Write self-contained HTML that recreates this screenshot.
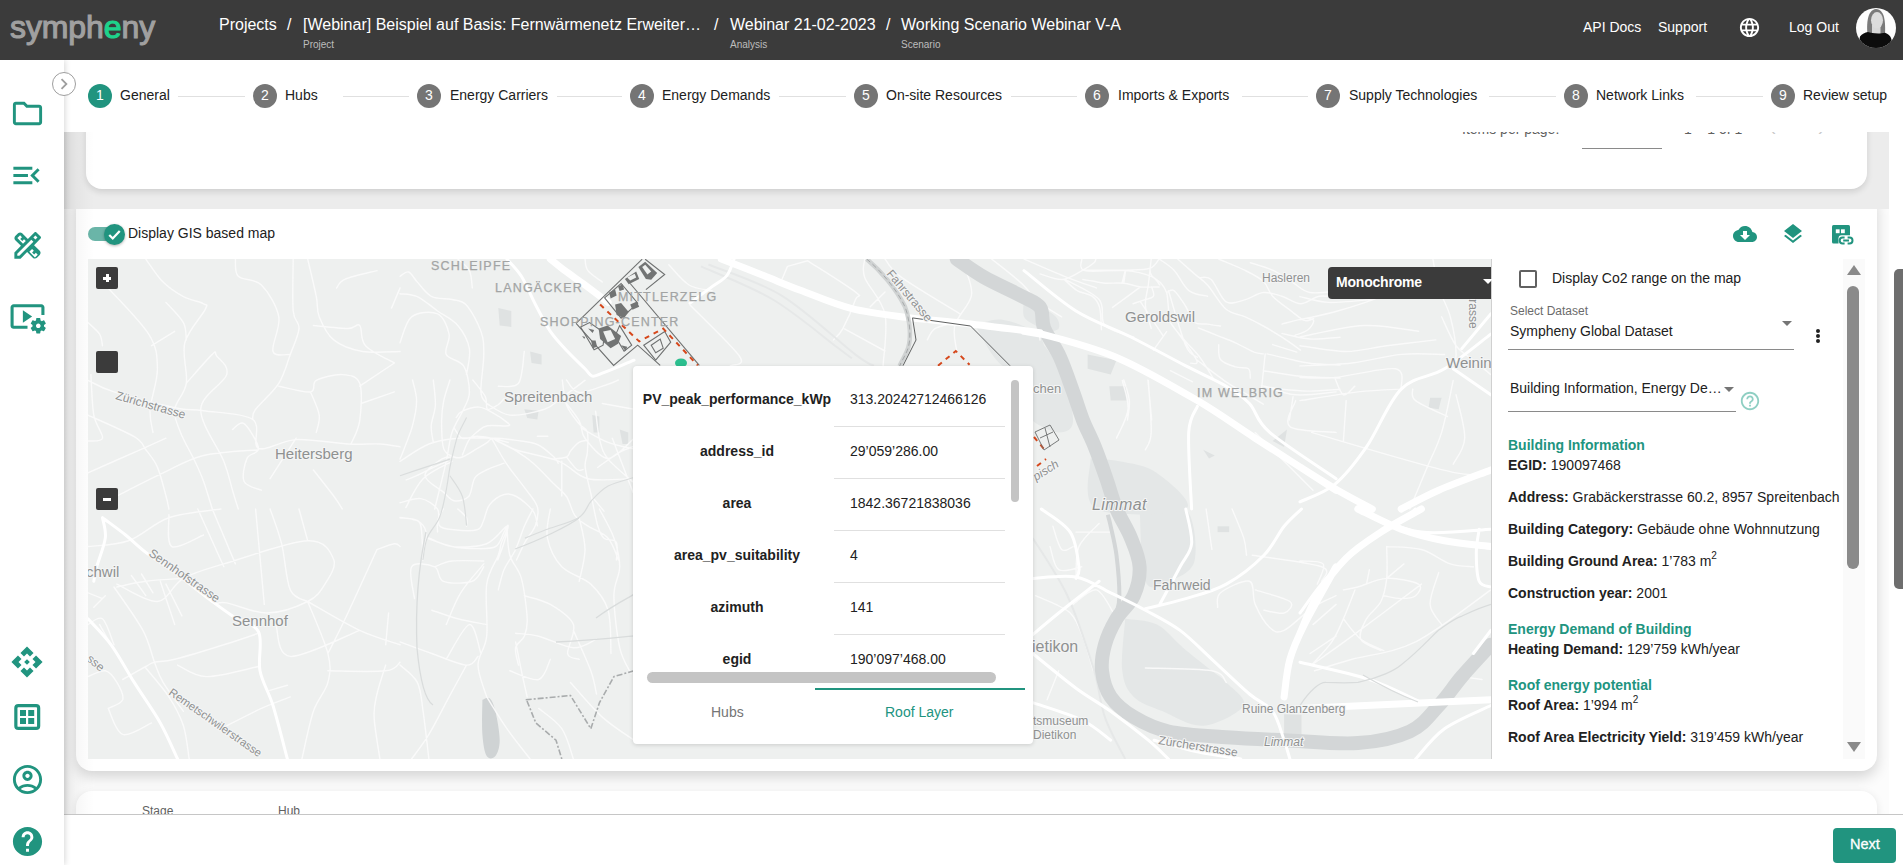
<!DOCTYPE html>
<html><head><meta charset="utf-8">
<style>
*{box-sizing:border-box;margin:0;padding:0}
html,body{width:1903px;height:865px;overflow:hidden;background:#fff;font-family:"Liberation Sans",sans-serif;color:#212121}
.t{position:absolute;white-space:nowrap;line-height:1}
.z{z-index:6}
#hdr{position:absolute;left:0;top:0;width:1903px;height:60px;background:#3b3b3b;z-index:10}
#hdr .bc{color:#fff;font-size:16px}
#hdr .sub{color:#bdbdbd;font-size:10px}
#hdr .nav{color:#fff;font-size:14px}
#side{position:absolute;left:0;top:60px;width:64px;height:805px;background:#fff;z-index:8;box-shadow:1px 0 6px rgba(0,0,0,.16)}
#side svg{position:absolute;fill:#21947f}
#content{position:absolute;left:64px;top:60px;width:1825px;height:805px;background:#f7f7f7;overflow:hidden}
#stepper{position:absolute;left:64px;top:60px;width:1839px;height:72px;background:#fff;z-index:4}
.sc{position:absolute;width:24px;height:24px;border-radius:50%;background:#757575;color:#fff;font-size:14px;text-align:center;line-height:23px;z-index:5}
.sl{position:absolute;font-size:14px;color:#212121;white-space:nowrap;line-height:1;z-index:5}
.ln{position:absolute;height:1px;background:#e0e0e0;z-index:5}
.card{position:absolute;background:#fff;border-radius:16px}
.pt{position:absolute;font-size:14px;line-height:1;white-space:nowrap}
.pl{font-weight:bold;text-align:center;width:200px}
.sep{position:absolute;height:1px;background:#e0e0e0;left:834px;width:171px}
.ri{position:absolute;left:1508px;font-size:14px;line-height:1;white-space:nowrap;color:#212121}
.ri b{font-weight:bold}
.rh{position:absolute;left:1508px;font-size:14px;line-height:1;white-space:nowrap;color:#21947f;font-weight:bold}
sup{font-size:10px;vertical-align:top;position:relative;top:-3px}
</style></head><body>

<div id="hdr">
  <div class="t" style="left:10px;top:11px;font-size:32px;color:#a0a0a0;letter-spacing:-0.1px;-webkit-text-stroke:1.1px #a0a0a0">symph<span style="color:#1ed38b;-webkit-text-stroke:1.1px #1ed38b">e</span>ny</div>
  <div class="t bc" style="left:219px;top:17px">Projects</div>
  <div class="t bc" style="left:287px;top:17px">/</div>
  <div class="t bc" style="left:303px;top:17px">[Webinar] Beispiel auf Basis: Fernwärmenetz Erweiter…</div>
  <div class="t sub" style="left:303px;top:40px">Project</div>
  <div class="t bc" style="left:714px;top:17px">/</div>
  <div class="t bc" style="left:730px;top:17px">Webinar 21-02-2023</div>
  <div class="t sub" style="left:730px;top:40px">Analysis</div>
  <div class="t bc" style="left:886px;top:17px">/</div>
  <div class="t bc" style="left:901px;top:17px">Working Scenario Webinar V-A</div>
  <div class="t sub" style="left:901px;top:40px">Scenario</div>
  <div class="t nav" style="left:1583px;top:20px">API Docs</div>
  <div class="t nav" style="left:1658px;top:20px">Support</div>
  <svg style="position:absolute;left:1738px;top:16px" width="23" height="23" viewBox="0 0 24 24"><path fill="#fff" d="M11.99 2C6.47 2 2 6.48 2 12s4.47 10 9.99 10C17.52 22 22 17.52 22 12S17.52 2 11.99 2zm6.93 6h-2.95c-.32-1.25-.78-2.45-1.38-3.56 1.84.63 3.37 1.91 4.33 3.56zM12 4.04c.83 1.2 1.48 2.53 1.91 3.96h-3.82c.43-1.43 1.08-2.76 1.91-3.96zM4.26 14C4.1 13.36 4 12.69 4 12s.1-1.36.26-2h3.38c-.08.66-.14 1.32-.14 2 0 .68.06 1.34.14 2H4.26zm.82 2h2.95c.32 1.25.78 2.45 1.38 3.56-1.84-.63-3.37-1.9-4.33-3.56zm2.95-8H5.08c.96-1.66 2.49-2.93 4.33-3.56C8.81 5.55 8.35 6.75 8.03 8zM12 19.96c-.83-1.2-1.48-2.53-1.91-3.96h3.82c-.43 1.43-1.08 2.76-1.91 3.96zM14.34 14H9.66c-.09-.66-.16-1.32-.16-2 0-.68.07-1.35.16-2h4.68c.09.65.16 1.32.16 2 0 .68-.07 1.34-.16 2zm.25 5.56c.6-1.11 1.06-2.31 1.38-3.56h2.95c-.96 1.65-2.49 2.93-4.33 3.56zM16.36 14c.08-.66.14-1.32.14-2 0-.68-.06-1.34-.14-2h3.38c.16.64.26 1.31.26 2s-.1 1.36-.26 2h-3.38z"/></svg>
  <div class="t nav" style="left:1789px;top:20px">Log Out</div>
  <svg style="position:absolute;left:1856px;top:8px" width="40" height="40" viewBox="0 0 40 40">
    <defs><clipPath id="av"><circle cx="20" cy="20" r="20"/></clipPath></defs>
    <g clip-path="url(#av)">
      <rect width="40" height="40" fill="#fdfdfd"/>
      <path d="M11.5 27 C10.5 16 11 2 20 1 C29 1.5 29.5 14 29 27 Z" fill="#7a7a7a"/>
      <rect x="16" y="17" width="8.5" height="10" fill="#d8d8d8"/>
      <ellipse cx="21" cy="12.3" rx="6" ry="8.3" fill="#dcdcdc"/>
      <path d="M2 40 L4 28.5 C6 26 9 24.5 12 24 C15 25.5 24 26 29 24.8 C32 26 34.5 28 35 30 L38 40 Z" fill="#0c0c0c"/>
    </g>
  </svg>
</div>

<div id="content"></div>
<div id="side">
  <svg style="left:10px;top:36px" width="35" height="35" viewBox="0 0 24 24"><path d="M9.17 6l2 2H20v10H4V6h5.17M10 4H4c-1.1 0-1.99.9-1.99 2L2 18c0 1.1.9 2 2 2h16c1.1 0 2-.9 2-2V8c0-1.1-.9-2-2-2h-8l-2-2z"/></svg>
  <svg style="left:9px;top:98px" width="35" height="35" viewBox="0 0 24 24"><path d="M3 18h13v-2H3v2zm0-5h10v-2H3v2zm0-7v2h13V6H3zm18 9.59L17.42 12 21 8.41 19.59 7l-5 5 5 5L21 15.59z"/></svg>
  <svg style="left:10px;top:168px" width="35" height="35" viewBox="0 0 24 24"><path d="M20.97 7.27c.39-.39.39-1.02 0-1.41l-2.83-2.830c-.39-.39-1.02-.39-1.41 0l-4.49 4.49-3.89-3.89c-.78-.78-2.05-.78-2.83 0l-1.9 1.9c-.78.78-.78 2.05 0 2.83l3.89 3.89L3 16.76V21h4.24l4.52-4.52 3.89 3.89c.95.95 2.23.6 2.83 0l1.9-1.9c.78-.78.78-2.05 0-2.83l-3.89-3.89 4.48-4.48zM5.04 6.94l1.89-1.9L8.2 6.31 7.02 7.5l1.41 1.41 1.19-1.19 1.2 1.2-1.9 1.9-3.88-3.88zm11.3 8.68l-1.190 1.19 1.41 1.41 1.19-1.19 1.27 1.27-1.9 1.9-3.89-3.89 1.9-1.9 1.21 1.21zM6.41 19H5v-1.41l9.61-9.61 1.3 1.3.11.11L6.41 19zm9.61-12.44l1.41-1.41 1.41 1.41-1.41 1.41-1.41-1.41z"/></svg>
  <svg style="left:9px;top:238px" width="37" height="37" viewBox="0 0 24 24"><path d="M3 6h18v5h2V6c0-1.1-.9-2-2-2H3c-1.1 0-2 .9-2 2v12c0 1.1.9 2 2 2h9v-2H3V6zM15 12 9 8v8zM22.71 18.43c.03-.29.04-.58.01-.86l1.07-.85c.1-.08.12-.21.06-.32l-1.03-1.79c-.06-.11-.19-.15-.31-.11l-1.28.5c-.23-.17-.48-.31-.75-.42l-.2-1.36c-.02-.13-.12-.22-.25-.22h-2.07c-.12 0-.23.09-.25.21l-.2 1.36c-.26.11-.51.26-.74.42l-1.28-.5c-.12-.05-.25 0-.31.11l-1.03 1.79c-.06.11-.04.24.06.32l1.07.86c-.03.29-.04.58-.01.86l-1.07.85c-.1.08-.12.21-.06.32l1.03 1.79c.06.11.19.15.31.11l1.27-.5c.23.17.48.31.75.42l.2 1.36c.02.12.12.21.25.21h2.07c.12 0 .23-.09.25-.21l.2-1.36c.26-.11.51-.26.74-.42l1.28.5c.12.05.25 0 .31-.11l1.03-1.79c.06-.11.04-.24-.06-.32l-1.06-.86zM19 19.5c-.83 0-1.5-.67-1.5-1.5s.67-1.5 1.5-1.5 1.5.67 1.5 1.5-.67 1.5-1.5 1.5z"/></svg>
  <svg style="left:10px;top:585px" width="34" height="34" viewBox="0 0 24 24"><path d="M14 12l-2 2-2-2 2-2 2 2zm-2-6l2.12 2.12 2.5-2.5L12 1 7.38 5.62l2.5 2.5L12 6zm-6 6l2.12-2.12-2.5-2.5L1 12l4.62 4.62 2.5-2.5L6 12zm12 0l-2.12 2.12 2.5 2.5L23 12l-4.62-4.62-2.5 2.5L18 12zm-6 6l-2.12-2.12-2.5 2.5L12 23l4.62-4.62-2.5-2.5L12 18z"/></svg>
  <svg style="left:10px;top:640px" width="35" height="35" viewBox="10 700 35 35"><rect x="15.85" y="705.6" width="22.8" height="22.8" rx="2.5" fill="none" stroke="#21947f" stroke-width="3.2"/><rect x="20" y="710" width="6" height="6"/><rect x="28.2" y="710" width="6" height="6"/><rect x="20" y="718" width="6" height="6"/><rect x="28.2" y="718" width="6" height="6"/></svg>
  <svg style="left:10px;top:702px" width="35" height="35" viewBox="0 0 24 24"><path d="M12 2C6.48 2 2 6.48 2 12s4.48 10 10 10 10-4.48 10-10S17.52 2 12 2zM7.35 18.5C8.66 17.56 10.26 17 12 17s3.34.56 4.65 1.5c-1.31.94-2.91 1.5-4.65 1.5s-3.34-.56-4.65-1.5zm10.79-1.38C16.45 15.8 14.32 15 12 15s-4.45.8-6.14 2.12C4.7 15.730 4 13.95 4 12c0-4.42 3.58-8 8-8s8 3.58 8 8c0 1.95-.7 3.73-1.86 5.12zM12 6c-1.93 0-3.5 1.57-3.5 3.5S10.07 13 12 13s3.5-1.57 3.5-3.5S13.93 6 12 6zm0 5c-.83 0-1.5-.67-1.5-1.5S11.17 8 12 8s1.5.67 1.5 1.5S12.83 11 12 11z"/></svg>
  <svg style="left:10px;top:764px" width="35" height="35" viewBox="0 0 24 24"><path d="M12 2C6.48 2 2 6.48 2 12s4.48 10 10 10 10-4.48 10-10S17.52 2 12 2zm1 17h-2v-2h2v2zm2.07-7.75l-.9.92C13.45 12.9 13 13.5 13 15h-2v-.5c0-1.1.45-2.1 1.17-2.83l1.24-1.26c.37-.36.59-.86.59-1.41 0-1.1-.9-2-2-2s-2 .9-2 2H8c0-2.21 1.79-4 4-4s4 1.79 4 4c0 .88-.36 1.68-.93 2.25z"/></svg>
</div>
<!-- collapse btn -->
<div style="position:absolute;left:52px;top:72px;width:24px;height:24px;border-radius:50%;background:#fff;border:1px solid #9e9e9e;z-index:9"><svg width="22" height="22" viewBox="0 0 24 24" style="position:absolute;left:0;top:0"><path fill="#9e9e9e" d="M10 6 8.59 7.41 13.17 12l-4.58 4.59L10 18l6-6z"/></svg></div>

<div id="stepper"></div>
<div class="sc" style="left:88px;top:84px;background:#21947f">1</div>
<div class="sl" style="left:120px;top:88px">General</div>
<div class="ln" style="left:178px;top:96px;width:67px"></div>
<div class="sc" style="left:253px;top:84px;background:#757575">2</div>
<div class="sl" style="left:285px;top:88px">Hubs</div>
<div class="ln" style="left:343px;top:96px;width:66px"></div>
<div class="sc" style="left:417px;top:84px;background:#757575">3</div>
<div class="sl" style="left:450px;top:88px">Energy Carriers</div>
<div class="ln" style="left:557px;top:96px;width:65px"></div>
<div class="sc" style="left:630px;top:84px;background:#757575">4</div>
<div class="sl" style="left:662px;top:88px">Energy Demands</div>
<div class="ln" style="left:779px;top:96px;width:67px"></div>
<div class="sc" style="left:854px;top:84px;background:#757575">5</div>
<div class="sl" style="left:886px;top:88px">On-site Resources</div>
<div class="ln" style="left:1011px;top:96px;width:66px"></div>
<div class="sc" style="left:1085px;top:84px;background:#757575">6</div>
<div class="sl" style="left:1118px;top:88px">Imports &amp; Exports</div>
<div class="ln" style="left:1242px;top:96px;width:66px"></div>
<div class="sc" style="left:1316px;top:84px;background:#757575">7</div>
<div class="sl" style="left:1349px;top:88px">Supply Technologies</div>
<div class="ln" style="left:1489px;top:96px;width:67px"></div>
<div class="sc" style="left:1564px;top:84px;background:#757575">8</div>
<div class="sl" style="left:1596px;top:88px">Network Links</div>
<div class="ln" style="left:1696px;top:96px;width:67px"></div>
<div class="sc" style="left:1771px;top:84px;background:#757575">9</div>
<div class="sl" style="left:1803px;top:88px">Review setup</div>
<!-- content backgrounds -->
<div style="position:absolute;left:64px;top:132px;width:1825px;height:77px;background:#ececec;z-index:2"></div>
<div style="position:absolute;left:64px;top:208px;width:1825px;height:606px;background:#fcfcfc;z-index:0"></div>
<div style="position:absolute;left:1889px;top:60px;width:14px;height:805px;background:#fff;z-index:1"></div>
<!-- top card -->
<div class="card" style="left:86px;top:100px;width:1781px;height:89px;z-index:3;box-shadow:0 3px 6px rgba(0,0,0,.12)"></div>
<div class="t" style="left:1462px;top:122px;font-size:14px;color:#616161;z-index:3">Items per page:</div>
<div style="position:absolute;left:1582px;top:148px;width:80px;height:1px;background:#8a8a8a;z-index:3"></div>
<div class="t" style="left:1684px;top:122px;font-size:14px;color:#616161;z-index:3">1 – 1 of 1</div>
<div class="t" style="left:1770px;top:120px;font-size:18px;color:#c8c8c8;z-index:3">‹</div><div class="t" style="left:1818px;top:120px;font-size:18px;color:#c8c8c8;z-index:3">›</div>
<!-- map card -->
<div class="card" style="left:76px;top:190px;width:1801px;height:581px;z-index:1;box-shadow:0 6px 14px rgba(0,0,0,.16)"></div>
<div style="position:absolute;left:88px;top:227px;width:28px;height:14px;border-radius:7px;background:#6ab5a8;z-index:3"></div>
<div style="position:absolute;left:104px;top:224px;width:21px;height:21px;border-radius:50%;background:#21947f;z-index:3;box-shadow:0 1px 3px rgba(0,0,0,.3)"><svg width="21" height="21" viewBox="0 0 24 24"><path fill="none" stroke="#fff" stroke-width="2.6" d="M6 12.5l4 4 8-8.5"/></svg></div>
<div class="t" style="left:128px;top:226px;font-size:14px;color:#212121;z-index:3">Display GIS based map</div>
<svg style="position:absolute;left:1733px;top:222px;z-index:3" width="24" height="24" viewBox="0 0 24 24"><path fill="#21947f" d="M19.35 10.04C18.67 6.59 15.64 4 12 4 9.11 4 6.6 5.64 5.35 8.04 2.34 8.36 0 10.91 0 14c0 3.31 2.690 6 6 6h13c2.76 0 5-2.24 5-5 0-2.64-2.05-4.78-4.65-4.96zM17 13l-5 5-5-5h3V9h4v4h3z"/></svg>
<svg style="position:absolute;left:1781px;top:222px;z-index:3" width="24" height="24" viewBox="0 0 24 24"><path fill="#21947f" d="M11.99 18.54l-7.37-5.73L3 14.07l9 7 9-7-1.63-1.27-7.38 5.74zM12 16l7.36-5.73L21 9l-9-7-9 7 1.63 1.27L12 16z"/></svg>
<svg style="position:absolute;left:1830px;top:223px;z-index:3" width="26" height="24" viewBox="1830 223 26 24"><rect x="1832" y="225" width="18" height="18.5" rx="1.5" fill="#21947f"/><rect x="1835.8" y="229.3" width="3.8" height="3.9" fill="#fff"/><rect x="1841" y="229.3" width="3.8" height="3.9" fill="#fff"/><rect x="1838.5" y="235.2" width="17" height="11" rx="3" fill="#fff"/><path fill="none" stroke="#21947f" stroke-width="2" d="M1844.6 237.6h-2a2.9 2.9 0 0 0 0 5.8h2M1847.6 237.6h2a2.9 2.9 0 0 1 0 5.8h-2M1843.2 240.5h5.8"/></svg>

<div style="position:absolute;left:64px;top:132px;width:30px;height:733px;z-index:3;background:linear-gradient(to right,rgba(0,0,0,.085),rgba(0,0,0,.03) 40%,rgba(0,0,0,0))"></div>
<!-- map -->
<div style="position:absolute;left:88px;top:259px;width:1404px;height:500px;background:#eef0ef;overflow:hidden;z-index:3;border-right:1px solid #d0d0d0">
<svg width="1404" height="500" viewBox="0 0 1404 500" style="position:absolute;left:0;top:0">
<rect width="1404" height="500" fill="#eef0ef"/>
<path d="M1037.2 359.8 C1042.5 360.8 1059.3 360.8 1068.9 365.6 C1078.6 370.4 1085.8 381.0 1095.0 388.7 C1104.1 396.4 1116.6 406.1 1123.9 411.8 C1131.1 417.6 1133.0 417.6 1138.3 423.4 C1143.6 429.2 1159.5 439.3 1155.7 446.5 C1151.8 453.8 1128.7 465.8 1115.2 466.8 C1101.7 467.7 1086.3 457.1 1074.7 452.3 C1063.2 447.5 1052.6 444.6 1045.8 437.9 C1039.1 431.1 1035.7 424.9 1034.3 411.8 C1032.8 398.8 1036.7 368.5 1037.2 359.8" fill="#e4e7e7"/>
<path d="M1051.6 250.0 C1059.3 250.0 1088.7 241.3 1097.8 250.0 C1107.0 258.7 1109.4 290.0 1106.5 302.0 C1103.6 314.1 1088.7 318.9 1080.5 322.3 C1072.3 325.6 1062.2 334.3 1057.4 322.3 C1052.6 310.2 1052.6 262.0 1051.6 250.0" fill="#e4e7e7"/>
<path d="M936.0 80.9 C938.9 81.4 947.1 78.0 953.3 83.8 C959.6 89.6 968.3 102.6 973.6 115.6 C978.9 128.6 985.6 152.2 985.1 161.8 C984.7 171.5 977.4 173.4 970.7 173.4 C963.9 173.4 950.5 166.7 944.7 161.8 C938.9 157.0 937.4 158.0 936.0 144.5 C934.6 131.0 936.0 91.5 936.0 80.9" fill="#e4e7e7"/>
<path d="M1002.5 199.4 C1007.3 199.9 1020.3 199.9 1031.4 202.3 C1042.5 204.7 1057.9 205.9 1068.9 213.9 C1080.0 221.8 1108.0 244.0 1097.8 250.0 C1087.7 256.0 1024.2 258.4 1008.3 250.0 C992.4 241.6 1003.4 207.9 1002.5 199.4" fill="#e4e7e7"/>
<path d="M936.0 40.5 C938.4 41.4 945.2 43.4 950.5 46.2 C955.7 49.1 964.4 53.9 967.8 57.8 C971.2 61.7 972.1 67.0 970.7 69.4 C969.2 71.8 963.0 72.7 959.1 72.3 C955.3 71.8 951.4 68.9 947.6 66.5 C943.7 64.1 937.9 62.1 936.0 57.8 C934.1 53.5 936.0 43.4 936.0 40.5" fill="#e4e7e7"/>
<path d="M887.1 66.2 C891.7 65.3 903.9 58.9 914.7 60.7 C925.5 62.5 945.8 69.6 952.0 77.2 C958.2 84.9 958.2 101.8 952.0 106.7 C945.8 111.6 925.5 113.4 914.7 106.7 C903.9 99.9 891.7 73.0 887.1 66.2" fill="#e4e7e7"/>
<path d="M410.3 49.1 L423.3 52.0 L423.3 67.9 L411.7 66.5" fill="#dfe2e2"/>
<path d="M442.1 92.5 L453.6 95.4 L453.6 105.5 L443.5 104.0" fill="#dfe2e2"/>
<path d="M436.3 150.3 L450.7 151.7 L449.3 160.4 L439.2 159.0" fill="#dfe2e2"/>
<path d="M504.2 156.1 L511.4 157.5 L511.4 173.4 L505.6 173.4" fill="#dfe2e2"/>
<path d="M531.7 170.5 L540.3 173.4 L540.3 185.0 L534.5 185.0" fill="#dfe2e2"/>
<path d="M999.6 95.4 L1028.5 101.2 L1022.7 115.6 L999.6 109.8" fill="#dfe2e2"/>
<path d="M1021.3 127.2 L1038.6 127.2 L1038.6 141.6 L1022.7 141.6" fill="#dfe2e2"/>
<path d="M1115.2 190.8 L1126.8 196.5 L1121.0 199.4" fill="#dfe2e2"/>
<path d="M1196.1 455.2 L1213.5 455.8 L1213.5 475.4 L1196.1 475.4" fill="#dfe2e2"/>
<path d="M1129.6 267.3 L1141.2 267.3 L1141.2 273.1 L1129.6 273.1" fill="#dfe2e2"/>
<path d="M1342.1 138.7 L1353.6 138.7 L1350.7 150.3 L1340.6 148.8" fill="#dfe2e2"/>
<path d="M1184.6 182.1 L1199.0 170.5 L1196.1 187.9" fill="#dfe2e2"/>
<path d="M394.4 440.8 C395.6 440.5 399.4 437.4 401.6 439.3 C403.8 441.2 405.7 445.3 407.4 452.3 C409.1 459.3 411.7 473.7 411.7 481.2 C411.7 488.7 409.5 494.5 407.4 497.1 C405.2 499.8 400.9 500.7 398.7 497.1 C396.5 493.5 395.1 484.8 394.4 475.4 C393.6 466.0 394.4 446.5 394.4 440.8" fill="#cfd3d4"/>
<g fill="none" stroke="#fbfbfb" stroke-linecap="round" stroke-linejoin="round" opacity="0.9">
<path stroke-width="1.45" d="M0.0 121.4 C4.3 123.3 11.6 128.4 26.0 132.9 C40.5 137.5 71.8 145.7 86.7 148.8 C101.6 152.0 102.6 149.8 115.6 151.7 C128.6 153.7 155.6 154.1 164.7 160.4 C173.9 166.7 163.3 185.9 170.5 189.3 C177.7 192.7 193.2 181.4 208.1 180.6 C223.0 179.9 246.1 184.2 260.1 185.0 C274.1 185.7 283.2 184.5 291.9 185.0 C300.6 185.5 308.8 187.4 312.1 187.9 M57.8 0.0 C60.7 3.9 68.9 16.9 75.1 23.1 C81.4 29.4 88.6 34.0 95.4 37.6 C102.1 41.2 112.0 42.6 115.6 44.8 C119.2 47.0 120.2 44.1 117.1 50.6 C113.9 57.1 100.0 71.5 96.8 83.8 C93.7 96.1 100.0 113.2 98.3 124.3 C96.6 135.4 87.7 142.1 86.7 150.3 C85.7 158.5 89.1 164.7 92.5 173.4 C95.9 182.1 103.1 194.1 106.9 202.3 C110.8 210.5 112.7 214.6 115.6 222.5 C118.5 230.5 122.8 245.4 124.3 250.0 M98.3 124.3 C102.6 119.5 119.2 100.0 124.3 95.4 C129.3 90.8 126.2 93.4 128.6 96.8 C131.0 100.2 141.4 106.7 138.7 115.6 C136.1 124.5 113.2 135.8 112.7 150.3 C112.2 164.7 130.5 188.8 135.8 202.3 C141.1 215.8 142.1 223.3 144.5 231.2 C146.9 239.2 149.3 246.9 150.3 250.0 M17.3 26.0 C24.6 34.2 52.0 61.2 60.7 75.1 C69.4 89.1 69.1 97.3 69.4 109.8 C69.6 122.4 62.9 139.7 62.1 150.3 C61.4 160.9 64.5 169.6 65.0 173.4 M205.2 0.0 C205.2 8.7 204.2 40.5 205.2 52.0 C206.2 63.6 211.5 62.1 211.0 69.4 C210.5 76.6 205.7 86.2 202.3 95.4 C198.9 104.5 196.5 115.1 190.8 124.3 C185.0 133.4 172.0 144.3 167.6 150.3 C163.3 156.3 165.2 158.7 164.7 160.4 M219.7 0.0 C221.1 6.3 226.4 27.9 228.3 37.6 C230.3 47.2 228.3 50.6 231.2 57.8 C234.1 65.0 238.4 75.1 245.7 80.9 C252.9 86.7 263.5 90.6 274.6 92.5 C285.6 94.4 305.9 92.5 312.1 92.5 M190.8 127.2 C196.1 128.1 216.3 133.9 222.5 132.9 C228.8 132.0 223.0 124.3 228.3 121.4 C233.6 118.5 247.1 115.1 254.3 115.6 C261.6 116.1 268.8 116.6 271.7 124.3 C274.6 132.0 273.1 151.7 271.7 161.8 C270.2 172.0 264.5 181.1 263.0 185.0 M144.5 170.5 C146.4 169.6 151.7 161.6 156.1 164.7 C160.4 167.9 170.0 183.5 170.5 189.3 C171.0 195.1 161.4 193.9 159.0 199.4 C156.6 205.0 153.7 217.2 156.1 222.5 C158.5 227.8 170.5 229.8 173.4 231.2 M0.0 156.1 C7.7 159.7 36.6 172.0 46.2 177.7 C55.9 183.5 53.9 185.7 57.8 190.8 C61.7 195.8 66.0 200.4 69.4 208.1 C72.7 215.8 76.1 230.0 78.0 237.0 C80.0 244.0 80.4 247.8 80.9 250.0 M0.0 213.9 C8.7 210.0 39.0 196.5 52.0 190.8 C65.0 185.0 73.7 181.1 78.0 179.2 M147.4 0.0 C147.9 2.9 146.0 13.0 150.3 17.3 C154.6 21.7 166.7 19.3 173.4 26.0 C180.2 32.8 188.8 46.7 190.8 57.8 C192.7 68.9 183.0 86.2 185.0 92.5 C186.9 98.7 199.4 94.9 202.3 95.4 M225.4 66.5 C231.2 67.0 252.4 69.4 260.1 69.4 C267.8 69.4 268.8 63.6 271.7 66.5 C274.6 69.4 271.7 80.4 277.5 86.7 C283.2 93.0 301.5 101.2 306.4 104.0 M271.7 127.2 L306.4 104.0 M273.1 144.5 L306.4 132.9 M170.5 190.8 C161.4 191.7 131.5 192.7 115.6 196.5 C99.7 200.4 89.6 207.1 75.1 213.9 C60.7 220.6 36.6 233.1 28.9 237.0 M0.0 182.1 C2.4 181.6 13.5 183.5 14.5 179.2 C15.4 174.9 7.7 166.7 5.8 156.1 C3.9 145.5 3.4 122.4 2.9 115.6 M222.5 132.9 C224.0 136.8 230.3 149.3 231.2 156.1 C232.2 162.8 228.8 170.5 228.3 173.4 M63.6 86.7 L86.7 72.3 M78.0 43.4 C80.9 46.7 92.0 57.3 95.4 63.6 C98.7 69.8 97.8 78.0 98.3 80.9 M0.0 63.6 C1.9 65.5 9.2 71.3 11.6 75.1 C14.0 79.0 14.0 84.8 14.5 86.7 M248.6 28.9 C250.0 27.5 250.5 23.1 257.2 20.2 C264.0 17.3 283.7 13.0 289.0 11.6 M303.5 49.1 L312.1 28.9 M182.1 219.7 L208.1 179.2 M225.4 211.0 C228.8 215.3 240.8 230.5 245.7 237.0 C250.5 243.5 252.9 247.8 254.3 250.0 M312.0 34.7 C314.9 35.2 323.1 34.7 329.3 37.6 C335.6 40.5 342.8 47.2 349.6 52.0 C356.3 56.8 364.5 60.2 369.8 66.5 C375.1 72.7 379.9 81.4 381.4 89.6 C382.8 97.8 379.0 111.3 378.5 115.6 M312.0 83.8 C313.9 79.5 317.3 62.6 323.6 57.8 C329.8 53.0 343.3 52.0 349.6 54.9 C355.8 57.8 359.7 68.4 361.1 75.1 C362.6 81.9 355.8 90.1 358.2 95.4 C360.7 100.7 371.7 100.7 375.6 106.9 C379.4 113.2 381.4 125.7 381.4 132.9 C381.4 140.2 378.5 143.5 375.6 150.3 C372.7 157.0 366.9 164.7 364.0 173.4 C361.1 182.1 361.1 189.5 358.2 202.3 C355.4 215.1 348.6 242.1 346.7 250.0 M312.0 17.3 C313.4 16.6 317.8 12.0 320.7 13.0 C323.6 14.0 325.5 19.0 329.3 23.1 C333.2 27.2 338.0 34.7 343.8 37.6 C349.6 40.5 358.2 39.0 364.0 40.5 C369.8 41.9 373.7 40.9 378.5 46.2 C383.3 51.5 390.0 64.1 392.9 72.3 C395.8 80.4 395.8 85.3 395.8 95.4 C395.8 105.5 392.4 124.8 392.9 132.9 C393.4 141.1 397.7 142.6 398.7 144.5 M436.3 92.5 C435.3 97.8 434.8 118.5 430.5 124.3 C426.2 130.1 413.6 126.7 410.3 127.2 M398.7 144.5 C402.6 146.4 412.2 155.1 421.8 156.1 C431.5 157.0 447.8 153.2 456.5 150.3 C465.2 147.4 467.1 143.5 473.8 138.7 C480.6 133.9 493.1 124.3 497.0 121.4 M404.5 179.2 C408.3 181.1 416.5 186.9 427.6 190.8 C438.7 194.6 458.9 197.5 471.0 202.3 C483.0 207.1 487.8 216.8 499.9 219.7 C511.9 222.5 536.0 219.7 543.2 219.7 M473.8 138.7 C476.7 142.6 487.3 155.1 491.2 161.8 C495.0 168.6 492.2 172.9 497.0 179.2 C501.8 185.5 511.9 199.4 520.1 199.4 C528.3 199.4 541.8 182.6 546.1 179.2 M312.0 202.3 C316.8 199.4 331.3 188.8 340.9 185.0 C350.5 181.1 359.2 180.2 369.8 179.2 C380.4 178.2 398.7 179.2 404.5 179.2 M317.8 248.6 C320.7 243.7 327.4 227.4 335.1 219.7 C342.8 211.9 359.2 205.2 364.0 202.3 M497.0 0.0 C497.5 1.9 497.0 7.7 499.9 11.6 C502.8 15.4 511.9 21.2 514.3 23.1 M580.8 5.8 C584.2 9.2 593.8 21.7 601.0 26.0 C608.2 30.3 620.3 30.8 624.1 31.8 M473.8 202.3 L473.8 237.0 M514.3 144.5 L546.1 150.3 M369.8 0.0 C371.7 1.9 379.0 6.7 381.4 11.6 C383.8 16.4 383.8 26.0 384.3 28.9 M699.5 7.4 L694.0 20.2 M719.7 1.8 C727.7 7.1 759.6 26.7 767.5 33.1 C775.5 39.5 769.7 34.3 767.5 40.5 C765.4 46.6 758.3 63.1 754.7 69.9 C751.0 76.6 747.0 79.1 745.5 80.9 M602.0 46.0 C610.3 54.6 644.9 87.4 651.7 97.5 C658.4 107.6 644.0 105.1 642.5 106.7 M756.5 69.9 L797.0 92.0 M776.7 0.0 C776.7 3.1 773.4 9.2 776.7 18.4 C780.1 27.6 793.9 40.5 797.0 55.2 C800.0 69.9 795.4 98.1 795.1 106.7 M797.0 33.1 L782.2 47.8 M797.0 0.0 C799.7 3.1 800.9 9.2 813.5 18.4 C826.1 27.6 862.6 49.0 872.4 55.2 M877.9 11.0 C878.8 15.3 885.2 27.6 883.4 36.8 C881.6 46.0 869.3 57.0 866.9 66.2 C864.4 75.4 868.4 87.7 868.7 92.0 M839.3 80.9 C840.5 79.1 842.6 72.7 846.6 69.9 C850.6 67.1 860.4 65.3 863.2 64.4 M903.6 0.0 C909.2 4.6 929.4 19.6 936.7 27.6 C944.1 35.6 945.2 38.9 947.8 47.8 C950.3 56.7 951.3 75.4 952.0 80.9 M699.5 7.4 L719.7 1.8 M976.5 20.2 C982.2 23.6 1004.4 32.8 1011.1 40.5 C1017.9 48.2 1011.1 60.2 1016.9 66.5 C1022.7 72.7 1041.0 76.1 1045.8 78.0 M993.8 0.0 C994.3 1.9 989.5 9.6 996.7 11.6 C1003.9 13.5 1026.1 10.6 1037.2 11.6 C1048.2 12.5 1057.4 14.9 1063.2 17.3 C1068.9 19.7 1070.4 24.6 1071.8 26.0 M1037.2 11.6 L1034.3 23.1 M1063.2 0.0 C1062.7 4.3 1061.2 18.3 1060.3 26.0 C1059.3 33.7 1056.9 39.0 1057.4 46.2 C1057.9 53.5 1062.2 65.5 1063.2 69.4 M1080.5 31.8 C1083.4 40.9 1093.0 75.6 1097.8 86.7 C1102.7 97.8 1107.5 96.3 1109.4 98.3 M1175.9 127.2 C1181.2 128.6 1195.6 134.9 1207.7 135.8 C1219.7 136.8 1241.4 133.4 1248.1 132.9 M1207.7 141.6 C1206.7 146.0 1195.2 162.3 1201.9 167.6 C1208.6 172.9 1240.4 172.4 1248.1 173.4 M1034.3 121.4 C1035.2 126.2 1041.0 140.7 1040.0 150.3 C1039.1 159.9 1030.4 174.4 1028.5 179.2 M1060.3 121.4 C1060.8 130.1 1063.6 161.8 1063.2 173.4 C1062.7 185.0 1058.4 187.9 1057.4 190.8 M1167.2 173.4 C1172.0 178.2 1186.5 192.7 1196.1 202.3 C1205.7 211.9 1220.2 226.4 1225.0 231.2 M936.0 0.0 C942.7 2.9 964.4 12.5 976.5 17.3 C988.5 22.2 1003.0 27.0 1008.3 28.9 M936.0 34.7 L973.6 57.8 M1212.0 60.7 C1218.3 59.2 1236.1 55.9 1249.6 52.0 C1263.1 48.2 1282.3 41.9 1292.9 37.6 C1303.5 33.2 1309.8 27.9 1313.2 26.0 M1212.0 78.0 C1222.6 76.1 1255.8 67.4 1275.6 66.5 C1295.3 65.5 1321.3 71.3 1330.5 72.3 M1212.0 86.7 C1219.7 87.7 1243.8 92.5 1258.2 92.5 C1272.7 92.5 1283.8 88.6 1298.7 86.7 C1313.6 84.8 1339.6 81.9 1347.8 80.9 M1212.0 106.9 C1220.7 106.5 1247.2 106.0 1264.0 104.0 C1280.9 102.1 1297.7 96.8 1313.2 95.4 C1328.6 93.9 1349.3 95.4 1356.5 95.4 M1212.0 118.5 C1217.8 118.5 1230.8 119.9 1246.7 118.5 C1262.6 117.1 1296.3 107.9 1307.4 109.8 C1318.5 111.8 1312.2 126.7 1313.2 130.1 M1212.0 141.6 C1221.6 140.2 1252.9 134.9 1269.8 132.9 C1286.7 131.0 1305.9 130.5 1313.2 130.1 M1246.7 118.5 C1248.1 121.4 1252.0 134.4 1255.4 135.8 C1258.7 137.3 1265.0 128.6 1266.9 127.2 M1258.2 141.6 L1255.4 182.1 M1324.7 130.1 C1325.2 132.0 1321.8 137.0 1327.6 141.6 C1333.4 146.2 1354.1 154.9 1359.4 157.5 M1223.6 173.4 C1247.6 180.2 1338.2 208.1 1368.1 213.9 C1397.9 219.7 1397.0 209.1 1402.8 208.1 M1368.1 135.8 C1369.5 143.1 1377.2 167.6 1376.7 179.2 C1376.3 190.8 1367.1 200.9 1365.2 205.2 M1344.9 0.0 C1345.9 4.8 1347.8 19.3 1350.7 28.9 C1353.6 38.5 1359.4 46.7 1362.3 57.8 C1365.2 68.9 1368.1 86.7 1368.1 95.4 C1368.1 104.0 1363.3 107.4 1362.3 109.8 M1353.6 57.8 C1356.0 62.6 1362.8 79.5 1368.1 86.7 C1373.4 93.9 1379.6 96.3 1385.4 101.2 C1391.2 106.0 1399.9 113.2 1402.8 115.6 M1365.2 121.4 C1363.3 130.1 1358.0 159.0 1353.6 173.4 C1349.3 187.9 1344.5 195.3 1339.2 208.1 C1333.9 220.9 1324.7 243.0 1321.8 250.0 M1212.0 37.6 C1216.8 38.5 1228.9 42.9 1240.9 43.4 C1252.9 43.8 1277.0 40.9 1284.3 40.5 M0.0 287.6 C6.7 286.6 27.0 286.6 40.5 281.8 C53.9 277.0 65.5 264.0 80.9 258.7 C96.3 253.4 124.3 251.4 132.9 250.0 M28.9 325.1 C35.6 328.0 58.3 343.4 69.4 342.5 C80.4 341.5 84.3 325.6 95.4 319.4 C106.5 313.1 115.1 311.2 135.8 304.9 C156.6 298.7 201.3 282.5 219.7 281.8 C238.0 281.1 242.8 293.4 245.7 300.6 C248.6 307.8 241.3 318.2 237.0 325.1 C232.7 332.1 229.3 337.7 219.7 342.5 C210.0 347.3 192.7 353.8 179.2 354.0 C165.7 354.3 147.4 345.4 138.7 343.9 C130.1 342.5 129.1 345.1 127.2 345.4 M219.7 281.8 L211.0 250.0 M219.7 342.5 C228.3 347.3 256.3 364.2 271.7 371.4 C287.1 378.6 305.4 383.4 312.1 385.8 M219.7 342.5 C223.0 351.2 236.5 381.0 239.9 394.5 C243.3 408.0 242.3 413.8 239.9 423.4 C237.5 433.0 229.8 439.5 225.4 452.3 C221.1 465.1 215.8 492.1 213.9 500.0 M239.9 411.8 C249.5 411.8 285.6 413.3 297.7 411.8 C309.7 410.4 309.7 404.6 312.1 403.2 M271.7 371.4 C260.1 375.7 216.3 398.4 202.3 397.4 C188.3 396.4 190.3 370.9 187.9 365.6 M167.6 250.0 L176.3 345.4 M182.1 250.0 C184.0 255.8 190.3 271.2 193.6 284.7 C197.0 298.2 198.0 321.3 202.3 330.9 C206.6 340.6 216.8 340.6 219.7 342.5 M124.3 250.0 L147.4 304.9 M109.8 250.0 L135.8 307.8 M80.9 255.8 C81.4 261.1 78.0 284.2 83.8 287.6 C89.6 290.9 110.3 277.9 115.6 276.0 M170.5 374.3 C164.7 376.2 149.8 381.5 135.8 385.8 C121.9 390.2 98.3 397.4 86.7 400.3 C75.1 403.2 71.3 402.0 66.5 403.2 C61.7 404.4 63.1 404.6 57.8 407.5 C52.5 410.4 38.5 418.4 34.7 420.5 M89.6 406.1 C94.4 408.0 105.0 417.4 118.5 417.6 C132.0 417.9 161.8 409.2 170.5 407.5 M289.0 290.5 C283.7 302.0 265.4 342.5 257.2 359.8 C249.0 377.2 242.8 388.7 239.9 394.5 M289.0 290.5 C291.9 289.5 302.5 285.2 306.4 284.7 C310.2 284.2 311.2 287.1 312.1 287.6 M300.6 354.0 L297.7 385.8 M26.0 328.0 C30.8 335.3 48.2 358.9 54.9 371.4 C61.7 383.9 63.1 394.5 66.5 403.2 C69.8 411.8 70.3 415.2 75.1 423.4 C80.0 431.6 92.0 447.5 95.4 452.3 M57.8 409.0 C61.7 413.8 74.7 428.2 80.9 437.9 C87.2 447.5 92.0 456.4 95.4 466.8 C98.7 477.1 100.2 494.5 101.2 500.0 M179.2 432.1 L199.4 426.3 M138.7 466.8 C144.5 463.9 162.8 454.2 173.4 449.4 C184.0 444.6 197.5 439.8 202.3 437.9 M0.0 417.6 C2.9 416.7 12.5 410.9 17.3 411.8 C22.2 412.8 26.0 418.6 28.9 423.4 C31.8 428.2 36.1 436.4 34.7 440.8 C33.2 445.1 22.6 448.0 20.2 449.4 M20.2 449.4 C22.6 453.8 27.5 473.0 34.7 475.4 C41.9 477.8 58.8 465.8 63.6 463.9 M297.7 406.1 C296.2 410.9 290.9 426.3 289.0 435.0 C287.1 443.6 285.6 447.3 286.1 458.1 C286.6 468.9 290.9 493.0 291.9 500.0 M312.0 258.7 C314.9 259.2 325.0 259.2 329.3 261.6 C333.7 264.0 337.0 267.3 338.0 273.1 C339.0 278.9 335.6 292.4 335.1 296.2 M340.9 278.9 C344.8 280.3 354.4 286.6 364.0 287.6 C373.7 288.5 389.6 288.1 398.7 284.7 C407.9 281.3 416.5 267.3 418.9 267.3 C421.3 267.3 414.6 279.9 413.2 284.7 C411.7 289.5 412.7 289.5 410.3 296.2 C407.9 303.0 400.6 311.7 398.7 325.1 C396.8 338.6 400.2 363.7 398.7 377.2 C397.3 390.7 390.0 396.0 390.0 406.1 C390.0 416.2 397.3 432.6 398.7 437.9 M418.9 267.3 C419.4 272.2 419.4 287.6 421.8 296.2 C424.2 304.9 430.5 308.8 433.4 319.4 C436.3 330.0 438.7 350.2 439.2 359.8 C439.6 369.5 438.2 372.4 436.3 377.2 C434.4 382.0 428.6 383.9 427.6 388.7 C426.6 393.5 430.0 403.2 430.5 406.1 M312.0 382.9 C317.3 384.9 332.7 390.7 343.8 394.5 C354.9 398.4 370.8 405.6 378.5 406.1 C386.2 406.6 388.1 398.8 390.0 397.4 M346.7 307.8 C349.6 306.8 355.8 303.0 364.0 302.0 C372.2 301.1 390.5 302.0 395.8 302.0 M343.8 351.2 C348.1 352.6 360.7 357.4 369.8 359.8 C379.0 362.2 393.9 364.6 398.7 365.6 M326.5 339.6 C326.0 334.3 320.2 313.1 323.6 307.8 C326.9 302.5 341.4 305.4 346.7 307.8 C352.0 310.2 349.1 319.8 355.4 322.3 C361.6 324.7 377.5 324.7 384.3 322.3 C391.0 319.8 393.9 310.2 395.8 307.8 M358.2 365.6 C360.7 360.3 366.4 343.9 372.7 333.8 C379.0 323.7 392.0 309.7 395.8 304.9 M378.5 406.1 C375.6 411.4 367.4 426.3 361.1 437.9 C354.9 449.4 347.2 465.1 340.9 475.4 C334.6 485.8 326.5 495.9 323.6 500.0 M358.2 400.3 C362.1 394.5 375.6 366.6 381.4 365.6 C387.1 364.6 391.0 389.7 392.9 394.5 M312.0 406.1 C314.9 409.0 325.5 415.7 329.3 423.4 C333.2 431.1 333.2 439.5 335.1 452.3 C337.0 465.1 339.9 492.1 340.9 500.0 M444.9 250.0 C443.5 252.9 439.2 260.6 436.3 267.3 C433.4 274.1 431.0 283.2 427.6 290.5 C424.2 297.7 418.9 303.9 416.0 310.7 C413.2 317.4 411.2 327.6 410.3 330.9 M462.3 250.0 C461.8 254.8 457.5 269.3 459.4 278.9 C461.3 288.5 466.6 300.1 473.8 307.8 C481.1 315.5 495.0 317.9 502.8 325.1 C510.5 332.4 516.7 339.6 520.1 351.2 C523.5 362.7 522.5 387.3 523.0 394.5 M491.2 258.7 C492.2 264.0 497.0 279.9 497.0 290.5 C497.0 301.1 492.2 317.0 491.2 322.3 M511.4 250.0 C513.8 254.8 522.5 269.3 525.9 278.9 C529.2 288.5 531.7 298.2 531.7 307.8 C531.7 317.4 525.9 323.2 525.9 336.7 C525.9 350.2 528.8 375.7 531.7 388.7 C534.5 401.7 541.3 410.4 543.2 414.7 M427.6 374.3 C431.5 374.8 441.1 374.8 450.7 377.2 C460.4 379.6 475.8 388.2 485.4 388.7 C495.0 389.2 504.7 381.5 508.5 380.1 M436.3 336.7 C440.6 338.2 454.1 340.6 462.3 345.4 C470.5 350.2 482.5 357.4 485.4 365.6 C488.3 373.8 478.7 388.7 479.6 394.5 C480.6 400.3 489.3 399.3 491.2 400.3 M427.6 382.9 C428.6 387.8 431.5 402.7 433.4 411.8 C435.3 421.0 438.2 433.5 439.2 437.9 M421.8 411.8 C426.6 413.3 444.0 422.4 450.7 420.5 C457.5 418.6 460.4 403.7 462.3 400.3 M482.5 423.4 C487.8 429.2 503.7 448.5 514.3 458.1 C524.9 467.7 540.8 477.4 546.1 481.2 M398.7 437.9 C402.1 443.2 411.7 459.3 418.9 469.7 C426.2 480.0 438.2 494.9 442.1 500.0 M485.4 371.4 C488.3 378.1 498.9 401.3 502.8 411.8 C506.6 422.4 507.6 431.1 508.5 435.0 M450.7 449.4 C454.6 452.8 468.1 461.2 473.8 469.7 C479.6 478.1 483.5 494.9 485.4 500.0 M355.4 250.0 C354.4 251.9 350.5 257.7 349.6 261.6 C348.6 265.4 349.6 271.2 349.6 273.1 M369.8 250.0 C371.2 251.4 377.0 255.8 378.5 258.7 C379.9 261.6 378.5 265.9 378.5 267.3 M964.9 267.3 C966.3 271.2 970.2 287.1 973.6 290.5 C976.9 293.8 983.2 288.1 985.1 287.6 M962.0 287.6 C963.5 291.4 965.4 307.3 970.7 310.7 C976.0 314.1 989.9 308.3 993.8 307.8 M988.0 273.1 L1022.7 273.1 M1118.1 250.0 L1123.9 290.5 M1144.1 250.0 C1146.0 254.8 1153.2 271.2 1155.7 278.9 C1158.1 286.6 1158.1 293.4 1158.5 296.2 M1164.3 296.2 C1175.9 298.2 1222.1 303.5 1233.7 307.8 C1245.2 312.1 1233.7 319.8 1233.7 322.3 M1129.6 348.3 C1130.1 345.9 1127.2 338.2 1132.5 333.8 C1137.8 329.5 1155.7 320.3 1161.4 322.3 C1167.2 324.2 1163.8 337.7 1167.2 345.4 C1170.6 353.1 1176.8 364.2 1181.7 368.5 C1186.5 372.8 1188.9 374.8 1196.1 371.4 C1203.3 368.0 1216.3 354.0 1225.0 348.3 C1233.7 342.5 1244.3 338.6 1248.1 336.7 M1167.2 330.9 C1173.0 332.9 1197.1 338.6 1201.9 342.5 C1206.7 346.3 1200.5 352.6 1196.1 354.0 C1191.8 355.5 1179.3 351.6 1175.9 351.2 M1225.0 365.6 L1248.1 345.4 M1222.1 394.5 L1248.1 377.2 M985.1 345.4 C989.0 343.0 1001.5 329.5 1008.3 330.9 C1015.0 332.4 1022.7 350.2 1025.6 354.0 M947.6 336.7 C953.3 339.6 974.1 346.3 982.2 354.0 C990.4 361.8 994.3 378.1 996.7 382.9 M996.7 382.9 L1005.4 411.8 M970.7 411.8 L959.1 440.8 M1057.4 409.0 C1068.5 409.4 1110.4 409.4 1123.9 411.8 C1137.3 414.3 1135.9 421.5 1138.3 423.4 M1222.1 406.1 L1248.1 411.8 M988.0 319.4 C988.5 314.1 987.1 296.7 990.9 287.6 C994.8 278.4 1007.8 268.3 1011.1 264.5 M1298.7 287.6 C1304.5 288.1 1322.8 287.6 1333.4 290.5 C1344.0 293.4 1353.6 302.0 1362.3 304.9 C1371.0 307.8 1381.6 307.3 1385.4 307.8 M1298.7 287.6 C1298.7 292.9 1299.7 310.2 1298.7 319.4 C1297.7 328.5 1296.3 335.7 1292.9 342.5 C1289.6 349.2 1281.8 353.6 1278.5 359.8 C1275.1 366.1 1270.3 374.8 1272.7 380.1 C1275.1 385.4 1289.6 389.7 1292.9 391.6 M1223.6 406.1 C1230.3 401.3 1245.7 390.7 1264.0 377.2 C1282.3 363.7 1321.8 333.8 1333.4 325.1 M1255.4 330.9 C1257.8 330.4 1262.6 330.0 1269.8 328.0 C1277.0 326.1 1288.6 319.8 1298.7 319.4 C1308.8 318.9 1325.7 322.3 1330.5 325.1 C1335.3 328.0 1330.5 334.3 1327.6 336.7 C1324.7 339.1 1318.5 339.6 1313.2 339.6 C1307.9 339.6 1298.7 337.2 1295.8 336.7 M1266.9 330.9 C1265.0 335.7 1259.2 351.2 1255.4 359.8 C1251.5 368.5 1249.1 375.2 1243.8 382.9 C1238.5 390.7 1226.9 402.2 1223.6 406.1 M1350.7 313.6 C1349.3 318.9 1341.6 336.7 1342.1 345.4 C1342.5 354.0 1351.7 362.2 1353.6 365.6 M1255.4 359.8 C1258.2 363.2 1265.9 374.8 1272.7 380.1 C1279.4 385.4 1292.0 389.7 1295.8 391.6 M1226.5 411.8 C1232.7 409.9 1247.2 405.1 1264.0 400.3 C1280.9 395.5 1304.5 394.5 1327.6 382.9 C1350.7 371.4 1390.2 339.6 1402.8 330.9 M1212.0 302.0 C1215.9 302.5 1232.2 301.1 1235.1 304.9 C1238.0 308.8 1230.3 321.8 1229.3 325.1 M1281.4 310.7 L1278.5 325.1 M1316.0 304.9 L1298.7 319.4 M1373.8 417.6 L1394.1 420.5 M324.5 121.0 C325.2 124.5 328.6 134.2 328.6 141.8 C328.6 149.4 326.6 158.8 324.5 166.8 C322.4 174.8 318.2 184.1 316.2 189.7 C314.1 195.2 312.7 198.3 312.0 200.1 M345.3 121.0 C345.6 125.2 347.7 138.3 347.4 146.0 C347.0 153.6 343.6 160.5 343.2 166.8 C342.9 173.0 345.0 180.7 345.3 183.4 M361.9 121.0 C360.9 124.5 357.1 134.9 355.7 141.8 C354.3 148.7 353.6 154.6 353.6 162.6 C353.6 170.6 353.6 183.8 355.7 189.7 C357.8 195.6 363.0 196.6 366.1 198.0 C369.2 199.4 370.6 199.4 374.4 198.0 C378.3 196.6 384.8 192.1 389.0 189.7 C393.2 187.3 396.6 185.2 399.4 183.4 C402.2 181.7 400.8 179.6 405.7 179.3 C410.5 178.9 421.3 180.3 428.5 181.4 C435.8 182.4 443.1 182.7 449.4 185.5 C455.6 188.3 462.5 194.9 466.0 198.0 C469.5 201.1 469.5 203.2 470.2 204.2 M384.8 121.0 C386.9 123.8 394.9 132.8 397.3 137.6 C399.8 142.5 397.3 148.7 399.4 150.1 C401.5 151.5 407.0 147.7 409.8 146.0 C412.6 144.2 415.0 140.8 416.1 139.7 M368.2 158.5 C369.2 157.4 370.6 154.0 374.4 152.2 C378.3 150.5 385.9 147.7 391.1 148.1 C396.3 148.4 401.1 151.9 405.7 154.3 C410.2 156.7 415.7 160.5 418.1 162.6 C420.6 164.7 423.3 166.1 420.2 166.8 C417.1 167.5 404.6 165.7 399.4 166.8 C394.2 167.8 392.1 170.6 389.0 173.0 C385.9 175.5 383.1 177.5 380.7 181.4 C378.3 185.2 375.5 193.5 374.4 195.9 M366.1 168.9 C367.5 170.6 370.6 177.9 374.4 179.3 C378.3 180.7 384.1 177.2 389.0 177.2 C393.9 177.2 398.4 178.2 403.6 179.3 C408.8 180.3 417.4 182.7 420.2 183.4 M403.6 179.3 C406.0 183.4 412.6 195.9 418.1 204.2 C423.7 212.6 431.7 221.9 436.9 229.2 C442.1 236.5 447.6 241.7 449.4 248.0 C451.1 254.2 449.4 260.8 447.3 266.7 C445.2 272.6 440.0 277.6 436.9 283.3 C433.7 289.1 429.9 298.1 428.5 301.0 M407.7 181.4 C410.5 182.7 418.1 185.9 424.4 189.7 C430.6 193.5 438.3 198.3 445.2 204.2 C452.1 210.1 460.5 219.5 466.0 225.1 C471.6 230.6 475.0 232.3 478.5 237.5 C482.0 242.7 483.3 251.4 486.8 256.3 C490.3 261.1 493.8 262.9 499.3 266.7 C504.9 270.5 514.9 273.4 520.1 279.2 C525.3 284.9 528.8 297.4 530.5 301.0 M416.1 204.2 C413.3 205.3 404.3 208.1 399.4 210.5 C394.6 212.9 390.0 214.3 386.9 218.8 C383.8 223.3 384.1 233.7 380.7 237.5 C377.2 241.4 370.3 242.4 366.1 241.7 C361.9 241.0 360.6 237.5 355.7 233.4 C350.8 229.2 337.3 222.3 337.0 216.7 C336.6 211.2 348.8 203.2 353.6 200.1 C358.5 197.0 364.0 198.3 366.1 198.0 M318.2 220.9 C320.0 220.2 324.1 218.8 328.6 216.7 C333.2 214.7 340.1 210.8 345.3 208.4 C350.5 206.0 357.4 203.2 359.9 202.2 M312.0 243.8 C315.5 243.1 326.6 238.6 332.8 239.6 C339.1 240.7 346.3 245.5 349.5 250.0 C352.6 254.5 348.8 263.2 351.5 266.7 C354.3 270.2 359.9 270.2 366.1 270.8 C372.4 271.5 384.1 272.2 389.0 270.8 C393.9 269.5 393.2 266.7 395.2 262.5 C397.3 258.4 398.0 250.4 401.5 245.9 C405.0 241.4 411.5 236.9 416.1 235.5 C420.6 234.1 423.7 234.8 428.5 237.5 C433.4 240.3 441.7 247.3 445.2 252.1 C448.7 257.0 448.7 264.3 449.4 266.7 M312.0 258.4 C314.1 258.7 321.0 259.1 324.5 260.4 C328.0 261.8 331.1 259.9 332.8 266.7 C334.5 273.4 334.5 295.3 334.9 301.0 M339.1 279.2 C343.2 280.6 356.1 285.8 364.0 287.5 C372.0 289.2 379.6 289.6 386.9 289.6 C394.2 289.6 402.9 290.3 407.7 287.5 C412.6 284.7 414.0 276.4 416.1 272.9 C418.1 269.5 420.2 264.9 420.2 266.7 C420.2 268.4 417.8 277.6 416.1 283.3 C414.3 289.1 410.9 298.1 409.8 301.0 M463.9 200.1 C466.4 199.7 475.4 199.4 478.5 198.0 C481.6 196.6 480.6 194.2 482.7 191.8 C484.7 189.3 488.2 185.2 491.0 183.4 C493.8 181.7 497.9 181.7 499.3 181.4 M478.5 198.0 C480.2 200.1 486.1 208.4 488.9 210.5 C491.7 212.6 494.1 210.5 495.1 210.5 M474.3 121.0 C475.0 125.2 475.7 138.7 478.5 146.0 C481.3 153.3 487.5 160.2 491.0 164.7 C494.4 169.2 497.9 168.2 499.3 173.0 C500.7 177.9 499.7 187.9 499.3 193.8 C499.0 199.7 496.5 201.1 497.2 208.4 C497.9 215.7 501.4 227.8 503.5 237.5 C505.5 247.3 507.6 259.7 509.7 266.7 C511.8 273.6 512.8 276.4 516.0 279.2 C519.1 281.9 526.4 279.7 528.4 283.3 C530.5 287.0 528.4 298.1 528.4 301.0 M493.1 168.9 C497.6 171.3 511.4 180.0 520.1 183.4 C528.8 186.9 540.9 188.6 545.1 189.7 M509.7 208.4 C513.2 206.0 524.6 197.3 530.5 193.8 C536.4 190.4 542.7 188.6 545.1 187.6 M524.3 179.3 L545.1 233.4 M507.6 152.2 C508.3 157.1 509.7 173.4 511.8 181.4 C513.9 189.3 514.6 193.1 520.1 200.1 C525.7 207.0 540.9 219.2 545.1 223.0 M505.5 239.6 L516.0 252.1 M449.4 177.2 L459.8 177.2 M478.5 121.0 C480.6 123.1 484.0 132.8 491.0 133.5 C497.9 134.2 513.5 127.2 520.1 125.2 C526.7 123.1 528.8 121.7 530.5 121.0 M28.9 328.0 C33.7 327.1 46.7 323.7 57.8 322.3 C68.9 320.8 89.1 319.8 95.4 319.4 M43.4 316.5 L57.8 336.7 M53.5 315.0 L65.0 333.8 M72.3 322.3 L86.7 365.6 M78.0 325.1 L93.9 356.9 M0.0 333.8 L14.5 339.6 M5.8 348.3 L17.3 336.7 M0.0 365.6 C2.4 364.6 10.1 356.5 14.5 359.8 C18.8 363.2 24.1 381.5 26.0 385.8 M11.6 365.6 L23.1 385.8 M952.0 14.9 C955.7 15.8 967.2 21.1 974.3 20.5 C981.5 19.9 989.5 14.0 994.8 11.2 C1000.1 8.4 1003.8 5.6 1006.0 3.7 C1008.1 1.9 1007.5 0.6 1007.8 0.0 M994.8 11.2 C1001.9 11.2 1026.4 11.5 1037.6 11.2 C1048.8 10.9 1056.2 11.2 1061.8 9.3 C1067.4 7.4 1069.6 1.6 1071.1 0.0 M1037.6 11.2 L1035.8 24.2 M976.2 20.5 C978.4 22.3 984.6 28.8 989.2 31.6 C993.9 34.4 1000.4 34.4 1004.1 37.2 C1007.8 40.0 1010.0 42.8 1011.6 48.4 C1013.1 54.0 1013.1 67.0 1013.4 70.7 M994.8 20.5 C996.7 20.8 1002.3 21.7 1006.0 22.3 C1009.7 23.0 1012.2 23.9 1017.1 24.2 C1022.1 24.5 1029.9 23.6 1035.8 24.2 C1041.6 24.8 1046.6 27.3 1052.5 27.9 C1058.4 28.5 1068.0 27.9 1071.1 27.9 M1061.8 9.3 C1062.1 10.5 1061.8 14.3 1063.7 16.8 C1065.5 19.2 1070.5 21.4 1073.0 24.2 C1075.5 27.0 1077.3 29.5 1078.6 33.5 C1079.8 37.5 1079.8 43.4 1080.4 48.4 C1081.0 53.4 1079.5 57.7 1082.3 63.3 C1085.1 68.9 1092.2 76.0 1097.2 81.9 C1102.1 87.8 1107.4 92.4 1112.1 98.6 C1116.7 104.8 1122.9 115.7 1125.1 119.1 M1052.5 27.9 L1024.6 48.4 M1063.7 27.9 C1064.0 29.5 1066.8 35.1 1065.5 37.2 C1064.3 39.4 1059.6 39.7 1056.2 40.9 C1052.8 42.2 1046.9 44.0 1045.1 44.7 M1078.6 33.5 C1079.8 33.2 1082.9 29.5 1086.0 31.6 C1089.1 33.8 1093.8 41.3 1097.2 46.5 C1100.6 51.8 1102.8 60.2 1106.5 63.3 C1110.2 66.4 1115.2 64.5 1119.5 65.1 C1123.8 65.8 1130.4 66.7 1132.5 67.0 M1071.1 0.0 C1073.6 1.9 1081.0 5.9 1086.0 11.2 C1091.0 16.4 1095.3 27.3 1100.9 31.6 C1106.5 36.0 1116.4 36.3 1119.5 37.2 M1112.1 18.6 C1113.9 18.9 1118.9 16.4 1123.2 20.5 C1127.6 24.5 1132.5 39.4 1138.1 42.8 C1143.7 46.2 1150.5 42.5 1156.7 40.9 C1162.9 39.4 1169.1 34.1 1175.3 33.5 C1181.5 32.9 1187.7 35.4 1194.0 37.2 C1200.2 39.1 1206.4 44.7 1212.6 44.7 C1218.8 44.7 1224.6 38.2 1231.2 37.2 C1237.7 36.3 1248.5 38.8 1252.0 39.1 M1089.7 0.0 C1092.5 2.5 1101.5 10.5 1106.5 14.9 C1111.4 19.2 1114.2 20.2 1119.5 26.1 C1124.8 31.9 1131.9 45.0 1138.1 50.3 C1144.3 55.5 1150.5 54.9 1156.7 57.7 C1162.9 60.5 1169.1 63.6 1175.3 67.0 C1181.5 70.4 1187.7 74.1 1194.0 78.2 C1200.2 82.2 1209.5 89.0 1212.6 91.2 M1130.7 0.0 C1135.0 1.9 1149.3 7.4 1156.7 11.2 C1164.2 14.9 1170.7 18.0 1175.3 22.3 C1180.0 26.7 1180.0 32.3 1184.6 37.2 C1189.3 42.2 1198.0 48.1 1203.3 52.1 C1208.5 56.1 1212.6 60.2 1216.3 61.4 C1220.0 62.7 1224.0 59.9 1225.6 59.6 M1162.3 3.7 C1166.0 5.0 1177.8 8.1 1184.6 11.2 C1191.5 14.3 1197.1 18.6 1203.3 22.3 C1209.5 26.1 1213.7 31.9 1221.9 33.5 C1230.0 35.1 1247.0 31.9 1252.0 31.6 M1110.2 68.9 C1113.3 70.1 1122.6 73.8 1128.8 76.3 C1135.0 78.8 1141.2 81.0 1147.4 83.8 C1153.6 86.5 1161.4 91.2 1166.0 93.1 C1170.7 94.9 1173.8 94.6 1175.3 94.9 M1130.7 85.6 C1131.0 88.1 1129.7 96.8 1132.5 100.5 C1135.3 104.2 1142.8 106.4 1147.4 107.9 C1152.1 109.5 1158.0 107.9 1160.4 109.8 C1162.9 111.7 1162.0 117.6 1162.3 119.1 M1082.3 63.3 C1086.6 69.5 1104.9 93.7 1108.3 100.5 C1111.7 107.3 1103.7 103.6 1102.8 104.2 M1052.5 42.8 L1074.8 76.3 M1078.6 72.6 L1065.5 91.2 M1179.1 94.9 C1183.1 95.8 1196.1 99.0 1203.3 100.5 C1210.4 102.1 1213.7 103.3 1221.9 104.2 C1230.0 105.2 1247.0 105.8 1252.0 106.1 M1175.3 111.7 C1181.5 112.6 1199.8 116.0 1212.6 117.3 C1225.3 118.5 1245.4 118.8 1252.0 119.1 M1173.5 126.6 C1176.9 127.2 1185.9 129.4 1194.0 130.3 C1202.0 131.2 1212.2 132.1 1221.9 132.1 C1231.5 132.1 1247.0 130.6 1252.0 130.3 M1177.2 94.9 L1173.5 130.3 M1194.0 74.4 C1198.6 75.4 1212.2 79.4 1221.9 80.0 C1231.5 80.7 1247.0 78.5 1252.0 78.2 M1184.6 85.6 L1208.8 93.1 M1194.0 65.1 C1197.7 64.2 1211.0 60.2 1216.3 59.6 C1221.6 58.9 1225.0 59.6 1225.6 61.4 C1226.2 63.3 1223.1 68.2 1220.0 70.7 C1216.9 73.2 1209.1 75.4 1207.0 76.3 M1205.1 137.7 L1201.4 161.0 M1059.9 121.0 L1063.7 161.0 M1035.8 121.0 C1036.7 124.4 1040.7 134.8 1041.3 141.4 C1042.0 148.1 1039.8 157.7 1039.5 161.0 M1082.3 111.7 L1104.6 122.8 M1108.3 100.5 C1113.3 104.2 1130.1 117.3 1138.1 122.8 C1146.2 128.4 1150.5 130.3 1156.7 134.0 C1162.9 137.7 1172.2 143.3 1175.3 145.2"/>
</g>
<g fill="none" stroke="#dadddd" stroke-width="1.2"><path d="M378.6 158.5 C377.2 161.2 372.4 169.9 370.3 175.1 C368.2 180.3 367.5 184.1 366.1 189.7 C364.7 195.2 363.3 201.1 361.9 208.4 C360.6 215.7 359.5 225.1 357.8 233.4 C356.1 241.7 354.7 250.7 351.5 258.4 C348.4 266.0 341.8 272.1 339.1 279.2 C336.3 286.3 335.6 297.4 334.9 301.0"/><path d="M436.9 279.2 C440.3 277.8 448.7 274.3 457.7 270.8 C466.7 267.4 483.3 263.2 491.0 258.4 C498.6 253.5 498.6 246.9 503.5 241.7 C508.3 236.5 513.2 231.0 520.1 227.1 C527.1 223.3 540.9 220.2 545.1 218.8"/><path d="M312.0 216.7 C316.2 215.3 328.6 211.2 337.0 208.4 C345.3 205.6 357.8 201.5 361.9 200.1"/><path d="M361.9 216.7 C364.0 220.2 371.7 229.2 374.4 237.5 C377.2 245.9 377.9 261.8 378.6 266.7"/></g>
<g fill="none" stroke="#e6e8e8" stroke-width="2"><path d="M620.4 5.5 C632.7 10.7 669.4 21.8 694.0 36.8 C718.5 51.8 752.2 84.0 767.5 95.6 C782.9 107.3 782.9 104.8 785.9 106.7"/><path d="M613.0 7.4 C625.0 12.9 662.1 27.0 684.8 40.5 C707.5 54.0 736.0 78.5 749.1 88.3 C762.3 98.1 761.4 97.5 763.9 99.3"/><path d="M944.7 278.9 C950.5 288.5 969.2 315.0 979.4 336.7 C989.5 358.4 999.1 388.7 1005.4 409.0 C1011.6 429.2 1011.6 442.9 1016.9 458.1 C1022.2 473.3 1033.8 493.0 1037.2 500.0"/></g>
<path d="M868.7 0.0 C873.3 3.1 885.6 12.3 896.3 18.4 C907.0 24.5 923.8 31.8 933.1 36.8 C942.4 41.8 948.1 42.8 952.0 48.2 C955.9 53.6 952.9 61.0 956.2 69.4 C959.6 77.7 967.3 87.7 972.1 98.3 C976.9 108.9 981.3 122.4 985.1 132.9 C989.0 143.5 991.6 152.7 995.2 161.8 C998.9 171.0 1003.0 178.2 1006.8 187.9 C1010.7 197.5 1014.8 209.3 1018.4 219.7 C1022.0 230.0 1024.4 240.1 1028.5 250.0 C1032.6 259.9 1039.1 269.3 1042.9 278.9 C1046.8 288.5 1051.1 298.2 1051.6 307.8 C1052.1 317.4 1049.7 328.0 1045.8 336.7 C1042.0 345.4 1033.3 351.6 1028.5 359.8 C1023.7 368.0 1019.3 377.2 1016.9 385.8 C1014.5 394.5 1013.1 403.2 1014.0 411.8 C1015.0 420.5 1017.4 430.2 1022.7 437.9 C1028.0 445.6 1036.2 452.3 1045.8 458.1 C1055.5 463.9 1065.1 469.2 1080.5 472.5 C1095.9 475.9 1119.0 476.9 1138.3 478.3 C1157.6 479.8 1174.2 480.3 1196.1 481.2 C1218.0 482.2 1248.9 485.5 1269.8 484.1 C1290.8 482.7 1308.3 478.8 1321.8 472.5 C1335.3 466.3 1342.1 455.7 1350.7 446.5 C1359.4 437.4 1365.2 427.7 1373.8 417.6 C1382.5 407.5 1397.9 391.1 1402.8 385.8" fill="none" stroke="#d3d6d7" stroke-width="14" stroke-linecap="round" stroke-linejoin="round"/>
<path d="M1019.8 255.8 C1020.3 257.7 1021.3 260.6 1022.7 267.3 C1024.2 274.1 1027.0 284.7 1028.5 296.2 C1029.9 307.8 1031.4 327.1 1031.4 336.7 C1031.4 346.3 1029.0 351.2 1028.5 354.0" fill="none" stroke="#d3d6d7" stroke-width="4"/>
<g fill="none" stroke="#fff" stroke-linecap="round" stroke-linejoin="round">
<path stroke-width="3" d="M418.9 0.0 C421.3 2.9 428.6 9.6 433.4 17.3 C438.2 25.0 443.0 37.1 447.8 46.2 C452.7 55.4 457.0 64.5 462.3 72.3 C467.6 80.0 473.8 86.2 479.6 92.5 C485.4 98.7 492.9 105.7 497.0 109.8 C501.1 113.9 501.3 116.3 504.2 117.1 C507.1 117.8 507.3 116.8 514.3 114.2 C521.3 111.5 540.8 103.3 546.1 101.2 M646.1 0.0 C644.9 2.8 642.5 12.0 638.8 16.6 C635.1 21.2 630.2 23.0 624.1 27.6 C617.9 32.2 605.7 41.4 602.0 44.1 M936.0 11.6 C944.7 18.3 970.2 40.9 988.0 52.0 C1005.8 63.1 1024.6 68.9 1042.9 78.0 C1061.2 87.2 1082.0 98.7 1097.8 106.9 C1113.7 115.1 1127.7 120.9 1138.3 127.2 C1148.9 133.4 1154.2 136.8 1161.4 144.5 C1168.7 152.2 1167.2 160.9 1181.7 173.4 C1196.1 185.9 1237.1 211.9 1248.1 219.7 M1109.4 147.4 C1108.0 151.7 1101.7 156.3 1100.7 173.4 C1099.8 190.5 1103.1 237.2 1103.6 250.0 M1212.0 242.8 C1217.8 239.9 1235.6 234.6 1246.7 225.4 C1257.8 216.3 1267.4 203.8 1278.5 187.9 C1289.6 172.0 1300.2 143.1 1313.2 130.1 C1326.2 117.1 1341.6 119.0 1356.5 109.8 C1371.4 100.7 1395.0 80.9 1402.8 75.1 M1365.2 109.8 L1402.8 135.8 M1373.8 89.6 L1402.8 54.9 M14.5 258.7 C18.3 261.6 30.3 270.2 37.6 276.0 C44.8 281.8 49.6 287.1 57.8 293.4 C66.0 299.6 75.6 305.4 86.7 313.6 C97.8 321.8 114.6 335.3 124.3 342.5 C133.9 349.7 136.8 351.9 144.5 356.9 C152.2 362.0 165.9 363.7 170.5 372.8 C175.1 382.0 169.6 399.6 172.0 411.8 C174.4 424.1 180.4 431.8 185.0 446.5 C189.5 461.2 197.0 491.1 199.4 500.0 M14.5 258.7 C14.9 262.0 18.3 270.7 17.3 278.9 C16.4 287.1 10.6 300.6 8.7 307.8 C6.7 315.0 6.3 319.8 5.8 322.3 M0.0 359.8 C3.9 364.2 15.4 375.2 23.1 385.8 C30.8 396.4 38.1 410.4 46.2 423.4 C54.4 436.4 65.0 451.1 72.3 463.9 C79.5 476.6 86.7 494.0 89.6 500.0 M944.7 319.4 C951.9 319.1 975.0 315.5 988.0 317.9 C1001.0 320.3 1011.1 328.3 1022.7 333.8 C1034.3 339.4 1045.8 344.9 1057.4 351.2 C1068.9 357.4 1081.0 363.2 1092.1 371.4 C1103.1 379.6 1112.3 389.7 1123.9 400.3 C1135.4 410.9 1151.3 426.3 1161.4 435.0 C1171.5 443.6 1178.8 444.6 1184.6 452.3 C1190.3 460.0 1193.2 473.3 1196.1 481.2 C1199.0 489.2 1200.9 496.9 1201.9 500.0 M1057.4 349.7 C1064.1 348.0 1084.4 343.7 1097.8 339.6 C1111.3 335.5 1125.3 332.4 1138.3 325.1 C1151.3 317.9 1166.3 305.9 1175.9 296.2 C1185.5 286.6 1189.9 275.0 1196.1 267.3 C1202.4 259.6 1210.6 252.9 1213.5 250.0 M953.3 250.0 C958.2 253.9 976.0 263.5 982.2 273.1 C988.5 282.8 989.9 300.1 990.9 307.8 C991.9 315.5 988.5 317.4 988.0 319.4 M1097.8 250.0 C1098.8 255.8 1104.6 275.0 1103.6 284.7 C1102.7 294.3 1097.4 297.7 1092.1 307.8 C1086.8 317.9 1075.2 339.1 1071.8 345.4 M936.0 382.9 C941.8 378.1 958.2 364.2 970.7 354.0 C983.2 343.9 1004.4 327.6 1011.1 322.3 M944.7 394.5 C951.9 400.3 975.0 419.6 988.0 429.2 C1001.0 438.8 1010.7 443.6 1022.7 452.3 C1034.7 461.0 1050.6 473.3 1060.3 481.2 C1069.9 489.2 1077.1 496.9 1080.5 500.0 M944.7 443.6 C952.9 446.5 980.8 454.7 993.8 461.0 C1006.8 467.2 1017.9 477.8 1022.7 481.2 M1066.1 481.2 C1073.3 483.1 1095.0 489.6 1109.4 492.8 C1123.9 495.9 1145.5 498.8 1152.8 500.0 M1212.0 354.0 C1216.8 347.8 1229.3 328.5 1240.9 316.5 C1252.5 304.4 1269.8 290.5 1281.4 281.8 C1292.9 273.1 1302.6 269.7 1310.3 264.5 C1318.0 259.2 1324.7 252.4 1327.6 250.0 M1281.4 255.8 C1290.0 258.7 1313.2 270.7 1333.4 273.1 C1353.6 275.5 1391.2 270.7 1402.8 270.2 M1391.2 270.2 C1390.7 274.1 1388.3 284.7 1388.3 293.4 C1388.3 302.0 1388.8 316.5 1391.2 322.3 C1393.6 328.0 1400.8 327.1 1402.8 328.0 M1402.8 371.4 L1385.4 394.5 M1402.8 446.5 C1395.0 450.4 1369.0 460.7 1356.5 469.7 C1344.0 478.6 1332.4 494.9 1327.6 500.0 M1212.0 403.2 C1223.6 406.1 1261.1 413.8 1281.4 420.5 C1301.6 427.3 1324.7 439.8 1333.4 443.6"/>
<path stroke-width="7" d="M462.3 0.0 C464.7 1.9 471.0 7.2 476.7 11.6 C482.5 15.9 489.7 20.7 497.0 26.0 C504.2 31.3 516.2 40.5 520.1 43.4 M633.3 0.0 C640.3 2.8 662.4 11.3 675.6 16.6 C688.8 21.8 697.6 25.7 712.4 31.3 C727.1 36.8 745.5 45.1 763.9 49.7 C782.2 54.3 803.7 56.4 822.7 58.9 C841.7 61.3 856.3 61.9 877.9 64.4 C899.4 66.8 939.7 72.0 952.0 73.6 M936.0 72.3 C940.8 73.2 949.0 73.5 964.9 78.0 C980.8 82.6 1007.3 89.1 1031.4 99.7 C1055.5 110.3 1086.8 128.4 1109.4 141.6 C1132.1 154.9 1144.1 164.3 1167.2 179.2 C1190.3 194.1 1234.7 222.5 1248.1 231.2 M1212.0 208.1 C1218.3 211.9 1237.5 224.2 1249.6 231.2 C1261.6 238.2 1278.5 246.9 1284.3 250.0 M1402.8 211.0 C1394.1 214.4 1365.7 224.7 1350.7 231.2 C1335.8 237.7 1319.4 246.9 1313.2 250.0 M1248.1 307.8 C1242.8 317.4 1224.1 350.2 1216.3 365.6 C1208.6 381.0 1205.3 388.2 1201.9 400.3 C1198.5 412.3 1197.1 431.6 1196.1 437.9 M1212.0 374.3 C1214.9 368.0 1221.6 349.2 1229.3 336.7 C1237.0 324.2 1247.6 309.7 1258.2 299.1 C1268.8 288.5 1280.4 281.3 1292.9 273.1 C1305.4 264.9 1326.6 253.9 1333.4 250.0 M1269.8 250.0 C1277.0 253.4 1298.7 264.9 1313.2 270.2 C1327.6 275.5 1341.6 278.9 1356.5 281.8 C1371.4 284.7 1395.0 286.6 1402.8 287.6 M1212.0 449.4 L1402.8 440.8"/>
</g></svg>
<svg width="1404" height="500" viewBox="88 259 1404 500" style="position:absolute;left:0;top:0">
<g fill="none" stroke="#a9acad" stroke-width="1.6" stroke-dasharray="6 2 2 2">
<path d="M525.7 699.8 L570.5 695.5 L590.8 728.7 L599.5 702.6 L613.9 676.6 L634 670.8"/>
<path d="M527 701 L535.8 722.9 L556 740.2 L561.8 759"/>
</g>
<path d="M866.6 259 C880 270 896 288 905 306.8 C910 320 912 340 907 351 C904 358 901 362 899.7 366" fill="none" stroke="#d0d3d3" stroke-width="4.5"/>
<path d="M866.6 259 C880 270 896 288 905 306.8 C910 320 912 340 907 351 C904 358 901 362 899.7 366" fill="none" stroke="#a6a9aa" stroke-width="1" stroke-dasharray="5 3"/>
<path d="M912.5 317.9 L970.5 326 L1010 365.7 M912.5 317.9 L916 340 L903 365.7" fill="none" stroke="#5f6161" stroke-width="1"/>
<!-- stream lines -->
<g fill="none" stroke="#d9dcdc" stroke-width="1.3">
<path d="M426 532 C420 560 415 600 417 648 C420 680 425 700 433 705"/>
<path d="M596 618 C620 600 645 590 634 593"/>
<path d="M556 642 C600 640 640 635 634 636"/>
<path d="M515 549 C540 540 570 525 579 518"/>
<path d="M1300 705.5 C1310 690 1320 682 1326 682.4 C1340 683 1350 683 1358 682.4 C1380 678 1395 670 1401 665 C1420 650 1430 638 1438.7 630 C1450 622 1455 618 1462 616 C1475 610 1485 606 1491 604.4"/>
<path d="M1363 675 C1380 685 1400 695 1418 702"/>
</g>
<!-- shopping center -->
<g fill="none" stroke="#6e7070" stroke-width="1.1">
<path d="M576.1 323.4 L642.2 259.2"/>
<path d="M645.2 259.2 L664.7 274.5 L645.9 289.6"/>
<path d="M630.2 283.5 L699.3 365.4"/>
<path d="M576.1 323.4 L613.6 365.4 L637.7 345.2 L660.2 365.4"/>
<path d="M604.6 297.8 L621.1 283.5 L637.7 303.1 L621.1 318.1 Z"/>
<path d="M580.6 327.1 L589.6 322.6 L604.6 333.1 L603.1 345.2 L594.1 349.7 Z"/>
<path d="M643.7 345.2 L664.7 331.6 L670.7 342.2 L655.7 360.2 Z"/>
<path d="M651.2 345.2 L660.2 339.1 L663.2 348.2 L655.7 352.7 Z"/>
<path d="M619.6 325.6 L631.7 345.2 L624.1 351.2 L615.1 336.1 Z"/>
</g>
<g fill="#727474">
<path d="M624.9 279.0 L636.2 271.5 L639.2 279.0 L628.7 284.3 Z"/>
<path d="M638.4 267.0 L645.2 261.8 L657.2 273.0 L651.2 279.8 L645.9 279.0 Z"/>
<path d="M609.1 292.6 L615.1 289.6 L616.6 295.6 L610.6 298.6 Z"/>
<path d="M618.1 286.6 L622.6 284.3 L624.1 289.6 L619.6 291.1 Z"/>
<path d="M630.2 304.6 L636.9 301.6 L639.2 306.8 L632.4 309.8 Z"/>
<path d="M615.1 304.6 L621.1 303.1 L628.7 312.1 L624.1 318.1 L616.6 315.1 Z"/>
<path d="M598.6 328.6 L607.6 325.6 L621.1 336.1 L618.1 343.7 L610.6 348.2 L600.1 339.1 Z"/>
<path d="M588.1 328.6 L594.1 330.1 L592.6 333.1 Z"/>
<path d="M582.1 336.1 L585.1 336.9 L584.3 339.1 Z"/>
<path d="M591.1 340.6 L595.6 340.6 L597.1 346.7 L592.6 348.2 Z"/>
<path d="M621.1 345.2 L627.2 346.7 L625.6 351.2 Z"/>
</g>
<g fill="#eef0ef">
<path d="M627.2 277.5 L634.7 273.8 L636.2 277.5 L630.2 280.5 Z"/>
<path d="M642.2 267.0 L645.2 264.8 L651.2 271.5 L647.4 274.5 Z"/>
<path d="M603.1 331.6 L610.6 330.1 L615.1 339.1 L607.6 342.2 Z"/>
</g>
<g fill="none" stroke="#d6481c" stroke-width="2" stroke-dasharray="5 5">
<path d="M600.1 304.6 L639.2 341.4 L663.2 328.6 L697.8 365.4"/>
<path d="M938 365.7 L955.8 351 L969.6 364.8"/>
<path d="M1034 437 L1044 449 M1037 466 L1046 459"/>
</g>
<ellipse cx="681" cy="363" rx="6" ry="4.5" fill="#2cbf8f"/>
<g fill="none" stroke="#6b6d6d" stroke-width="0.9">
<path d="M1035 432 L1050 425 L1059 440 L1044 450 Z M1040 438 L1053 432 M1045 428 L1050 447"/>
</g>
<!-- labels -->
<g font-family="Liberation Sans" fill="#8f9191" stroke="#f4f5f5" stroke-width="2.2" paint-order="stroke" stroke-linejoin="round">
<g font-size="12.5" letter-spacing="1.2" fill="#a2a4a4" stroke="#a2a4a4" stroke-width="0.25">
<text x="431" y="270">SCHLEIPFE</text>
<text x="495" y="292">LANGÄCKER</text>
<text x="540" y="326">SHOPPING-CENTER</text>
<text x="618" y="301">MITTLERZELG</text>
<text x="1197" y="397">IM WELBRIG</text>
</g>
<g font-size="15">
<text x="504" y="402">Spreitenbach</text>
<text x="275" y="459">Heitersberg</text>
<text x="86" y="577">chwil</text>
<text x="232" y="626">Sennhof</text>
<text x="1125" y="322">Geroldswil</text>
<text x="1446" y="368">Weinin</text>
<text x="1032" y="652" font-size="16">ietikon</text>
</g>
<g font-size="12">
<text x="1262" y="282">Hasleren</text>
<text x="1033" y="393" font-size="13">chen</text>
<text x="1153" y="590" font-size="14">Fahrweid</text>
<text x="1033" y="725">tsmuseum</text>
<text x="1033" y="739">Dietikon</text>
<text x="1242" y="713">Ruine Glanzenberg</text>
<text x="1264" y="746" font-style="italic">Limmat</text>
<text x="0" y="0" transform="translate(1158 744) rotate(9)">Zürcherstrasse</text>
<text x="0" y="0" transform="translate(115 399) rotate(16)">Zürichstrasse</text>
<text x="0" y="0" transform="translate(148 555) rotate(35)" font-size="12">Sennhofstrasse</text>
<text x="0" y="0" transform="translate(168 694) rotate(35)" font-size="11.3">Remetschwilerstrasse</text>
<text x="0" y="0" transform="translate(86 660) rotate(40)">sse</text>
<text x="0" y="0" transform="translate(886 274) rotate(50)">Fahrstrasse</text>
<text x="0" y="0" transform="translate(1036 481) rotate(-32)" font-style="italic">pisch</text>
<text x="0" y="0" transform="translate(1469 290) rotate(90)">strasse</text>
</g>
<text x="1092" y="510" font-size="16" font-style="italic" letter-spacing="0.4">Limmat</text>
</g>
</svg>

</div>
<!-- map controls -->
<div style="position:absolute;left:96px;top:267px;width:22px;height:22px;background:#3b3b3b;border-radius:2px;z-index:4"><div style="position:absolute;left:7px;top:9.5px;width:8px;height:3px;background:#fff"></div><div style="position:absolute;left:9.5px;top:7px;width:3px;height:8px;background:#fff"></div></div>
<div style="position:absolute;left:96px;top:351px;width:22px;height:22px;background:#3b3b3b;border-radius:2px;z-index:4"></div>
<div style="position:absolute;left:96px;top:488px;width:22px;height:22px;background:#3b3b3b;border-radius:2px;z-index:4"><div style="position:absolute;left:7px;top:9.5px;width:8px;height:3px;background:#fff"></div></div>
<div style="position:absolute;left:1328px;top:267px;width:163px;height:32px;background:#3b3b3b;border-radius:4px 0 0 4px;z-index:4"></div>
<div class="t" style="left:1336px;top:275px;font-size:14px;font-weight:bold;color:#fff;z-index:5;letter-spacing:-0.2px">Monochrome</div>
<div style="position:absolute;left:1483px;top:279px;width:0;height:0;border-left:5px solid transparent;border-right:5px solid transparent;border-top:5px solid #fff;z-index:5"></div>

<!-- popup -->
<div style="position:absolute;left:633px;top:366px;width:400px;height:378px;background:#fff;border-radius:4px;z-index:6;box-shadow:0 1px 4px rgba(0,0,0,.15)"></div>
<div class="pt pl z" style="left:637px;top:392px">PV_peak_performance_kWp</div>
<div class="pt z" style="left:850px;top:392px">313.20242712466126</div>
<div class="sep z" style="top:426px"></div>
<div class="pt pl z" style="left:637px;top:444px">address_id</div>
<div class="pt z" style="left:850px;top:444px">29’059’286.00</div>
<div class="sep z" style="top:478px"></div>
<div class="pt pl z" style="left:637px;top:496px">area</div>
<div class="pt z" style="left:850px;top:496px">1842.36721838036</div>
<div class="sep z" style="top:530px"></div>
<div class="pt pl z" style="left:637px;top:548px">area_pv_suitability</div>
<div class="pt z" style="left:850px;top:548px">4</div>
<div class="sep z" style="top:582px"></div>
<div class="pt pl z" style="left:637px;top:600px">azimuth</div>
<div class="pt z" style="left:850px;top:600px">141</div>
<div class="sep z" style="top:634px"></div>
<div class="pt pl z" style="left:637px;top:652px">egid</div>
<div class="pt z" style="left:850px;top:652px">190’097’468.00</div>
<div style="position:absolute;left:1011px;top:380px;width:8px;height:122px;border-radius:4px;background:#c4c4c4;z-index:7"></div>
<div style="position:absolute;left:647px;top:672px;width:349px;height:11px;border-radius:6px;background:#c4c4c4;z-index:7"></div>
<div style="position:absolute;left:633px;top:669px;width:400px;height:3px;background:#fff;z-index:6"></div>
<div style="position:absolute;left:815px;top:688px;width:210px;height:2px;background:#21947f;z-index:7"></div>
<div class="pt z" style="left:711px;top:705px;color:#757575">Hubs</div>
<div class="pt z" style="left:885px;top:705px;color:#21947f">Roof Layer</div>

<!-- right panel -->
<div style="position:absolute;left:1492px;top:259px;width:373px;height:500px;background:#fff;z-index:3"></div>
<div style="position:absolute;left:1519px;top:270px;width:18px;height:18px;border:2px solid #616161;border-radius:2px;z-index:4"></div>
<div class="t" style="left:1552px;top:271px;font-size:14px;color:#212121;z-index:4">Display Co2 range on the map</div>
<div class="t" style="left:1510px;top:305px;font-size:12px;color:#6b6b6b;z-index:4">Select Dataset</div>
<div class="t" style="left:1510px;top:324px;font-size:14px;color:#212121;z-index:4">Sympheny Global Dataset</div>
<div style="position:absolute;left:1782px;top:321px;width:0;height:0;border-left:5px solid transparent;border-right:5px solid transparent;border-top:5px solid #757575;z-index:4"></div>
<div style="position:absolute;left:1508px;top:349px;width:286px;height:1px;background:#8a8a8a;z-index:4"></div>
<div style="position:absolute;left:1816px;top:329px;width:4px;height:4px;border-radius:50%;background:#212121;z-index:4;box-shadow:0 5px 0 #212121,0 10px 0 #212121"></div>
<div class="t" style="left:1510px;top:381px;font-size:14px;color:#212121;z-index:4">Building Information, Energy De…</div>
<div style="position:absolute;left:1724px;top:387px;width:0;height:0;border-left:5px solid transparent;border-right:5px solid transparent;border-top:5px solid #757575;z-index:4"></div>
<div style="position:absolute;left:1508px;top:411px;width:228px;height:1px;background:#8a8a8a;z-index:4"></div>
<svg style="position:absolute;left:1739px;top:390px;z-index:4" width="22" height="22" viewBox="0 0 24 24"><path fill="#8fcfc3" d="M11 18h2v-2h-2v2zm1-16C6.48 2 2 6.48 2 12s4.48 10 10 10 10-4.48 10-10S17.52 2 12 2zm0 18c-4.41 0-8-3.59-8-8s3.59-8 8-8 8 3.59 8 8-3.59 8-8 8zm0-14c-2.21 0-4 1.79-4 4h2c0-1.1.9-2 2-2s2 .9 2 2c0 2-3 1.75-3 5h2c0-2.25 3-2.5 3-5 0-2.21-1.79-4-4-4z"/></svg>
<div class="rh" style="top:438px;z-index:4">Building Information</div>
<div class="ri" style="top:458px;z-index:4"><b>EGID:</b> 190097468</div>
<div class="ri" style="top:490px;z-index:4"><b>Address:</b> Grabäckerstrasse 60.2, 8957 Spreitenbach</div>
<div class="ri" style="top:522px;z-index:4"><b>Building Category:</b> Gebäude ohne Wohnnutzung</div>
<div class="ri" style="top:554px;z-index:4"><b>Building Ground Area:</b> 1’783 m<sup>2</sup></div>
<div class="ri" style="top:586px;z-index:4"><b>Construction year:</b> 2001</div>
<div class="rh" style="top:622px;z-index:4">Energy Demand of Building</div>
<div class="ri" style="top:642px;z-index:4"><b>Heating Demand:</b> 129’759 kWh/year</div>
<div class="rh" style="top:678px;z-index:4">Roof energy potential</div>
<div class="ri" style="top:698px;z-index:4"><b>Roof Area:</b> 1’994 m<sup>2</sup></div>
<div class="ri" style="top:730px;z-index:4"><b>Roof Area Electricity Yield:</b> 319’459 kWh/year</div>
<div style="position:absolute;left:1843px;top:259px;width:22px;height:500px;background:#fafafa;z-index:4"></div>
<div style="position:absolute;left:1847px;top:265px;width:0;height:0;border-left:7px solid transparent;border-right:7px solid transparent;border-bottom:10px solid #8a8a8a;z-index:5"></div>
<div style="position:absolute;left:1847px;top:286px;width:12px;height:283px;border-radius:6px;background:#8a8a8a;z-index:5"></div>
<div style="position:absolute;left:1847px;top:742px;width:0;height:0;border-left:7px solid transparent;border-right:7px solid transparent;border-top:10px solid #8a8a8a;z-index:5"></div>

<!-- bottom card -->
<div class="card" style="left:76px;top:791px;width:1801px;height:100px;z-index:2;box-shadow:0 2px 8px rgba(0,0,0,.1)"></div>
<div class="t" style="left:142px;top:805px;font-size:12px;color:#616161;z-index:3">Stage</div>
<div class="t" style="left:278px;top:805px;font-size:12px;color:#616161;z-index:3">Hub</div>
<!-- bottom bar -->
<div style="position:absolute;left:64px;top:814px;width:1839px;height:51px;background:#fff;border-top:1px solid #c6c6c6;z-index:7"></div>
<div style="position:absolute;left:1833px;top:828px;width:63px;height:35px;background:#21947f;border-radius:4px;z-index:8"></div>
<div class="t" style="left:1850px;top:837px;font-size:14.5px;color:#fff;z-index:9;-webkit-text-stroke:0.3px #fff">Next</div>
<!-- page scrollbar -->
<div style="position:absolute;left:1894px;top:269px;width:9px;height:320px;border-radius:5px 0 0 5px;background:#6e6e6e;z-index:9"></div>
</body></html>
